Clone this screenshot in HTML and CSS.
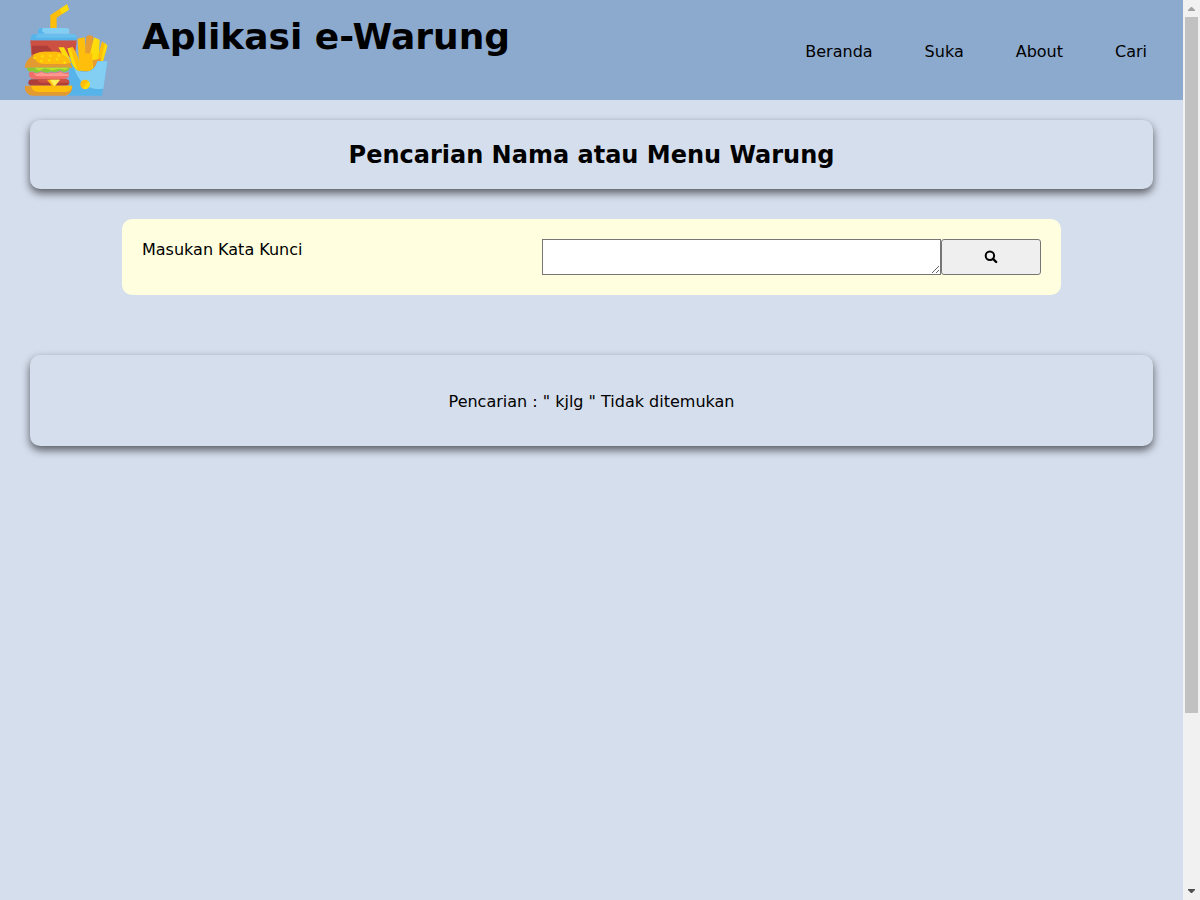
FILE: index.html
```html
<!DOCTYPE html>
<html lang="id">
<head>
<meta charset="utf-8">
<meta name="viewport" content="width=device-width, initial-scale=1">
<title>Aplikasi e-Warung</title>
<link rel="stylesheet" href="styles.css">
</head>
<body>
<div class="page">
  <header class="header">
    <svg class="logo" viewBox="0 0 330 300" aria-hidden="true">
      <path d="M121 86V45L171 13L177 29L140 53V86Z" fill="#ffbe0b"/>
      <path d="M150 27L171 13L177 29L156 42Z" fill="#fddc0c"/>
      <path d="M61 121H200L195 170H65Z" fill="#cc5142"/>
      <path d="M66 137H112L135 162H65Z" fill="#ad3e39"/>
      <path d="M84 101V92Q84 84 94 84H167Q178 84 178 94V101Z" fill="#83cff4"/>
      <path d="M84 101V92Q84 84 94 84H98Q93 92 100 97L106 101Z" fill="#57b4eb"/>
      <path d="M62 121V113Q62 102 75 102H188Q200 102 200 114V121Z" fill="#57b4eb"/>
      <path d="M80 113Q77 106 83 102H188Q200 102 200 113Z" fill="#68bfed"/>
      <path d="M203 116L224 112L229 168L222 214H208Z" fill="#ffbe0b"/>
      <path d="M229 110Q238 102 250 110L246 164L225 165Z" fill="#e89b30"/>
      <path d="M252 112L269 119L266 183L246 212L240 162Z" fill="#fddc0c"/>
      <path d="M276 124L292 137L279 184L255 205Z" fill="#ffbe0b"/>
      <path d="M285 128L292 137L279 184L272 182Z" fill="#fddc0c"/>
      <path d="M224 160H247V214H221Z" fill="#ffbe0b"/>
      <path d="M247 181L276 175L250 211Z" fill="#e89b30"/>
      <path d="M180 184H192Q199 214 228 216Q256 211 262 184H292L276 287H174Z" fill="#57b4eb"/>
      <path d="M193 207Q207 216 228 216Q257 212 262 184H292L280 266Q218 275 193 207Z" fill="#83cff4"/>
      <path d="M44 203Q47 180 68 166Q83 155 104 155H139Q166 158 179 182L187 203Z" fill="#e39a31"/>
      <path d="M69 166Q83 155 104 155H139Q167 159 179 183L187 188L162 192H101Q76 189 77 176Z" fill="#ffbe0b"/>
      <path d="M145 142H162L177 170L182 186L172 172L158 164Z" fill="#fddc0c"/>
      <path d="M172 145L188 142Q207 168 211 214Q193 210 185 188Z" fill="#fddc0c"/>
      <path d="M181 144L188 142Q207 168 211 214L203 211Z" fill="#ffbe0b"/>
      <circle cx="225" cy="253" r="14" fill="#ffbe0b"/>
      <path d="M218 265A14 14 0 0 0 236 244Z" fill="#fddc0c"/>
      <g fill="#fddc0c"><circle cx="74" cy="174" r="4"/><circle cx="97" cy="169" r="4"/><circle cx="94" cy="183" r="4"/><circle cx="118" cy="181" r="4"/><circle cx="121" cy="168" r="4"/><circle cx="141" cy="178" r="4"/><circle cx="147" cy="167" r="4"/><circle cx="164" cy="188" r="4"/></g>
      <path d="M51 203H180L176 210Q164 221 151 211Q136 220 123 214Q108 223 94 212Q80 224 68 214Q52 218 51 203Z" fill="#8bc832"/>
      <path d="M74 203H176L167 210L149 206L126 211L104 205L86 212Z" fill="#b9e52f"/>
      <path d="M57 218Q64 213 71 217Q82 223 94 214Q108 224 123 216Q137 222 151 213Q164 224 176 216V229Q172 237 161 237H72Q57 235 57 223Z" fill="#ed6f68"/>
      <path d="M72 219Q82 224 94 216Q108 225 123 218Q137 223 151 216Q164 225 176 221V229H86Q72 228 72 219Z" fill="#ff9990"/>
      <path d="M66 238H167Q178 239 178 248Q177 257 165 257H67Q55 256 55 248Q55 239 66 238Z" fill="#ad3e39"/>
      <path d="M82 238H167Q178 239 178 248H94Q84 247 82 238Z" fill="#cc5142"/>
      <path d="M45 257H187Q188 281 167 287H67Q42 282 45 257Z" fill="#e39a31"/>
      <path d="M63 257H187Q185 273 170 276H85Q66 274 63 257Z" fill="#ffbe0b"/>
      <path d="M111 239H150L131 264Z" fill="#ffbe0b"/>
      <path d="M120 239H150L133 259Z" fill="#fff05b"/>
    </svg>
    <h1 class="title">Aplikasi e-Warung</h1>
    <nav class="nav">
      <a href="#beranda">Beranda</a>
      <a href="#suka">Suka</a>
      <a href="#about">About</a>
      <a href="#cari">Cari</a>
    </nav>
  </header>
  <main class="main">
    <h2 class="card heading">Pencarian Nama atau Menu Warung</h2>
    <form class="search">
      <label class="search-label" for="keyword">Masukan Kata Kunci</label>
      <textarea class="search-input" id="keyword" rows="2"></textarea>
      <button class="search-button" type="button" aria-label="Cari">
        <svg class="search-icon" viewBox="0 0 14 14" aria-hidden="true"><circle cx="5.9" cy="5.7" r="4.2" fill="none" stroke="#000" stroke-width="2"/><path d="M9 8.8L12.2 12" stroke="#000" stroke-width="2.4" stroke-linecap="round"/></svg>
      </button>
    </form>
    <p class="card result">Pencarian : " kjlg " Tidak ditemukan</p>
  </main>
</div>
<div class="scrollbar" aria-hidden="true">
  <svg class="arrow" viewBox="0 0 17 17"><path d="M5 11V10L8 7H9L12 10V11Z" fill="#a3a3a3"/></svg>
  <div class="track"><div class="thumb"></div></div>
  <svg class="arrow" viewBox="0 0 17 17"><path d="M5 6V7L8 10H9L12 7V6Z" fill="#505050"/></svg>
</div>
</body>
</html>
```
FILE: styles.css
```css
* {
  box-sizing: border-box;
}

body {
  margin: 0;
  display: flex;
  min-height: 100vh;
  background: #d5deed;
  color: #000;
  font-family: Verdana, "DejaVu Sans", sans-serif;
  font-size: 16px;
  line-height: 20px;
}

.page {
  flex: 1;
  min-width: 0;
}

.header {
  display: flex;
  min-height: 100px;
  padding-left: 10px;
  padding-right: 10px;
  background: #8ca9ce;
}

.logo {
  width: 110px;
  height: 100px;
  flex: none;
}

.title {
  margin: 15px 0 0 22px;
  font-size: 36px;
  line-height: 44px;
}

.nav {
  display: flex;
  align-items: center;
  margin-left: auto;
  padding-top: 4px;
}

.nav a {
  padding: 16px 26px;
  color: #000;
  text-decoration: none;
}

.main {
  padding: 20px 30px;
}

.card {
  margin: 0;
  border-radius: 10px;
  box-shadow: 0 4px 8px rgba(0, 0, 0, 0.6);
  text-align: center;
}

.heading {
  padding: 21px 20px 19px;
  font-size: 24px;
  line-height: 29px;
}

.search {
  display: grid;
  grid-template-columns: 400fr 399fr 100fr;
  margin: 30px 92px 60px;
  padding: 20px;
  border-radius: 10px;
  background: #ffffdf;
}

.search-label {
  padding-top: 1px;
}

.search-input {
  width: 100%;
  height: 36px;
  margin: 0;
  padding: 2px;
  border: 1px solid #767676;
  background: #fff;
  resize: both;
}

.search-button {
  display: flex;
  align-items: center;
  justify-content: center;
  height: 36px;
  border: 1px solid #767676;
  border-radius: 3px;
  background: #efefef;
}

.search-icon {
  width: 14px;
  height: 14px;
}

.result {
  padding: 37px 20px 34px;
}

.scrollbar {
  position: sticky;
  top: 0;
  display: flex;
  flex-direction: column;
  flex: none;
  width: 17px;
  height: 100vh;
  background: #f1f1f1;
}

.arrow {
  width: 17px;
  height: 17px;
  flex: none;
}

.track {
  flex: 1;
  padding: 0 2px;
}

.thumb {
  height: 80.4%;
  background: #c1c1c1;
}
```
